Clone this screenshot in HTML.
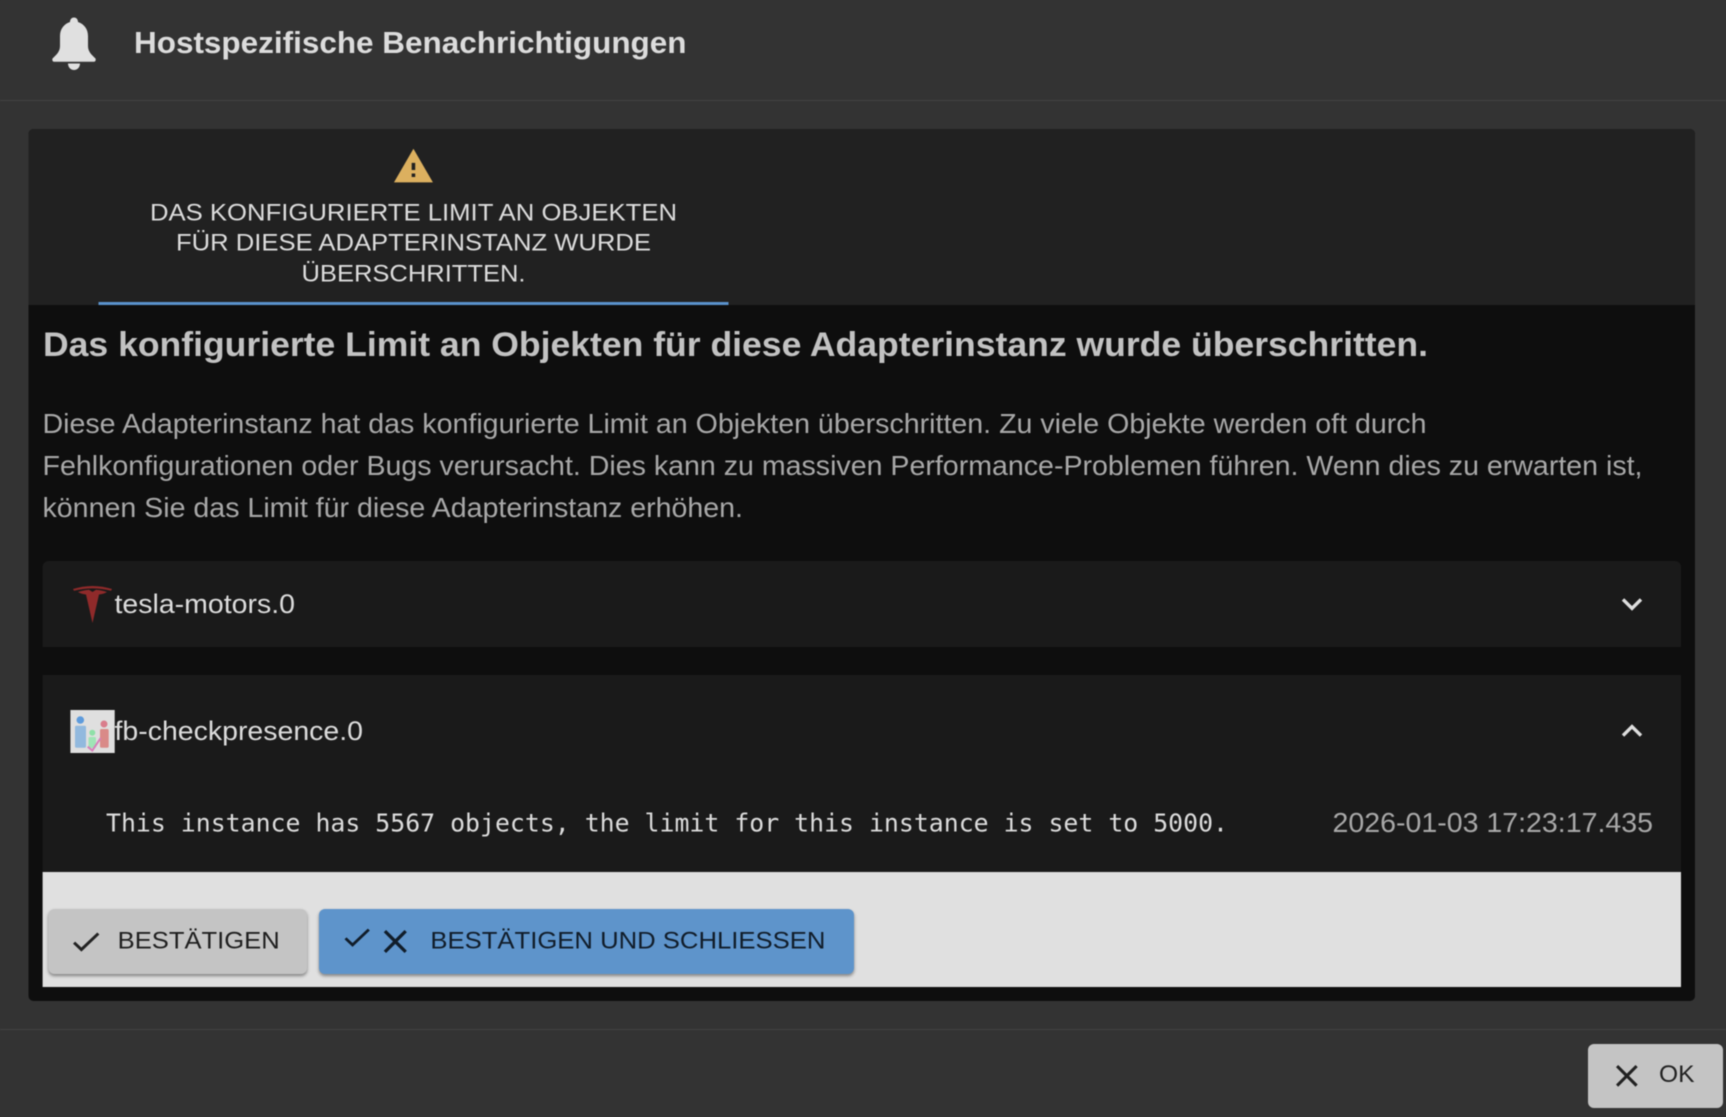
<!DOCTYPE html>
<html lang="de">
<head>
<meta charset="utf-8">
<title>Hostspezifische Benachrichtigungen</title>
<style>
html,body{margin:0;padding:0;background:#333;width:1726px;height:1117px;overflow:hidden}
svg{display:block;position:absolute;left:0;top:0;filter:blur(.45px)}
text{font-family:"Liberation Sans",Arial,sans-serif}
.mono{font-family:"DejaVu Sans Mono","Liberation Mono",monospace}
</style>
</head>
<body>
<svg width="1726" height="1117" viewBox="0 0 1726 1117" xmlns="http://www.w3.org/2000/svg">
  <rect width="1726" height="1117" fill="#333"/>
  <rect x="0" y="100" width="1726" height="1" fill="#434343"/>
  <rect x="0" y="1029" width="1726" height="1" fill="#434343"/>

  <!-- bell -->
  <path fill="#e0e0e0" d="M74 17.5C76.5 17.5 78 19.5 78 22C84 24 88 29 88 36L88 46C88 52 92 55 95.5 58.5C96 60 95.5 61.7 94 61.7L54 61.7C52.5 61.7 52 60 52.5 58.5C56 55 60 52 60 46L60 36C60 29 64 24 70 22C70 19.5 71.5 17.5 74 17.5Z"/>
  <path fill="#e0e0e0" d="M68 63.5L80 63.5C80 67 77.5 70 74 70C70.5 70 68 67 68 63.5Z"/>
  <text x="134" y="53" font-size="31" font-weight="700" fill="#dcdcdc" textLength="552.5" lengthAdjust="spacingAndGlyphs">Hostspezifische Benachrichtigungen</text>

  <!-- panel -->
  <rect x="28.5" y="129" width="1666.5" height="872" rx="5" fill="#0e0e0e"/>
  <path d="M28.5 305V134a5 5 0 0 1 5-5H1690a5 5 0 0 1 5 5V305Z" fill="#212121"/>
  <rect x="98.5" y="302" width="630" height="3" fill="#5a92cc"/>

  <!-- warning -->
  <path fill="#dcb05f" fill-rule="evenodd" transform="translate(392.2 145.2) scale(1.77)" d="M1 21h22L12 2 1 21zm12-3h-2v-2h2v2zm0-4h-2v-4h2v4z"/>
  <text x="150" y="220.3" font-size="24.2" fill="#dcdcdc" textLength="527" lengthAdjust="spacingAndGlyphs">DAS KONFIGURIERTE LIMIT AN OBJEKTEN</text>
  <text x="176" y="250.3" font-size="24.2" fill="#dcdcdc" textLength="475" lengthAdjust="spacingAndGlyphs">FÜR DIESE ADAPTERINSTANZ WURDE</text>
  <text x="301.5" y="281.3" font-size="24.2" fill="#dcdcdc" textLength="224" lengthAdjust="spacingAndGlyphs">ÜBERSCHRITTEN.</text>

  <!-- heading and text -->
  <text x="43" y="356" font-size="34" font-weight="700" fill="#c2c2c2" textLength="1385" lengthAdjust="spacingAndGlyphs">Das konfigurierte Limit an Objekten für diese Adapterinstanz wurde überschritten.</text>
  <text x="42.5" y="433" font-size="27.4" fill="#a8a8a8" textLength="1384" lengthAdjust="spacingAndGlyphs">Diese Adapterinstanz hat das konfigurierte Limit an Objekten überschritten. Zu viele Objekte werden oft durch</text>
  <text x="42.5" y="475" font-size="27.4" fill="#a8a8a8" textLength="1600" lengthAdjust="spacingAndGlyphs">Fehlkonfigurationen oder Bugs verursacht. Dies kann zu massiven Performance-Problemen führen. Wenn dies zu erwarten ist,</text>
  <text x="42.5" y="517" font-size="27.4" fill="#a8a8a8" textLength="700.5" lengthAdjust="spacingAndGlyphs">können Sie das Limit für diese Adapterinstanz erhöhen.</text>

  <!-- accordion 1 -->
  <path d="M42.6 647V567a6 6 0 0 1 6-6H1675a6 6 0 0 1 6 6V647Z" fill="#1a1a1a"/>
  <path fill="#8f2a2a" d="M73 589Q92.5 583 112 589L111 590.7Q92.5 586 74 590.7Z"/>
  <path fill="#8f2a2a" d="M78 592Q84 590 89 589.7L92.5 592L96 589.7Q101 590 107 592Q104 594 99 594.5L92.5 623L86 594.5Q81 594 78 592Z"/>
  <text x="114.5" y="613" font-size="27.2" fill="#dcdcdc" textLength="180.5" lengthAdjust="spacingAndGlyphs">tesla-motors.0</text>
  <path fill="#dedede" transform="translate(1611.6 583.6) scale(1.7)" d="M16.59 8.59 12 13.17 7.41 8.59 6 10l6 6 6-6z"/>

  <!-- accordion 2 -->
  <rect x="42.6" y="675" width="1638.4" height="197" fill="#1a1a1a"/>
  <rect x="70.4" y="710" width="44.3" height="43" fill="#dfdfdf"/>
  <circle cx="80.3" cy="720" r="3.8" fill="#5e9bdc"/>
  <rect x="75" y="725.7" width="11" height="22" rx="1.5" fill="#92b9de"/>
  <circle cx="104" cy="724" r="3.5" fill="#d97d8c"/>
  <rect x="100" y="729" width="8.7" height="18.7" rx="1.5" fill="#d98a88"/>
  <circle cx="92.3" cy="732.7" r="3" fill="#8fe0a8"/>
  <rect x="88.5" y="737" width="7.5" height="11" rx="1.5" fill="#a0e4b6"/>
  <path d="M87.7 746.7L92.3 750.5L100.7 738" fill="none" stroke="#d77fbb" stroke-width="2"/>
  <text x="114.5" y="740" font-size="27.2" fill="#dcdcdc" textLength="248.5" lengthAdjust="spacingAndGlyphs">fb-checkpresence.0</text>
  <path fill="#dedede" transform="translate(1611.6 710.6) scale(1.7)" d="m12 8-6 6 1.41 1.41L12 10.83l4.59 4.58L18 14z"/>
  <text class="mono" x="106" y="831.5" font-size="24.75" fill="#dcdcdc" textLength="1122" lengthAdjust="spacingAndGlyphs">This instance has 5567 objects, the limit for this instance is set to 5000.</text>
  <text x="1332.5" y="832" font-size="27.4" fill="#a8a8a8" textLength="320.5" lengthAdjust="spacingAndGlyphs">2026-01-03 17:23:17.435</text>

  <!-- action box -->
  <rect x="42.6" y="872" width="1638.4" height="115" fill="#e0e0e0"/>
  <rect x="48.5" y="909" width="258.5" height="65" rx="6" fill="#c4c4c4" style="filter:drop-shadow(0 2px 1.5px rgba(0,0,0,.42))"/>
  <path fill="#222" transform="translate(67.9 924.6) scale(1.5 1.42)" d="M9 16.17 4.83 12l-1.42 1.41L9 19 21 7l-1.41-1.41z"/>
  <text x="117.7" y="948.3" font-size="24.2" fill="#1f1f1f" textLength="162" lengthAdjust="spacingAndGlyphs">BESTÄTIGEN</text>

  <rect x="319" y="909" width="535" height="65" rx="6" fill="#5e94cb" style="filter:drop-shadow(0 2px 1.5px rgba(0,0,0,.42))"/>
  <path fill="#111d2a" transform="translate(339.6 921) scale(1.44 1.36)" d="M9 16.17 4.83 12l-1.42 1.41L9 19 21 7l-1.41-1.41z"/>
  <path fill="#111d2a" transform="translate(375.5 921.7) scale(1.65)" d="M19 6.41 17.59 5 12 10.59 6.41 5 5 6.41 10.59 12 5 17.59 6.41 19 12 13.41 17.59 19 19 17.59 13.41 12z"/>
  <text x="430.4" y="948.3" font-size="24.2" fill="#111d2a" textLength="395" lengthAdjust="spacingAndGlyphs">BESTÄTIGEN UND SCHLIESSEN</text>

  <!-- OK button -->
  <rect x="1588" y="1044" width="135" height="64" rx="6" fill="#c4c4c4"/>
  <path fill="#222" transform="translate(1608.25 1057.25) scale(1.55)" d="M19 6.41 17.59 5 12 10.59 6.41 5 5 6.41 10.59 12 5 17.59 6.41 19 12 13.41 17.59 19 19 17.59 13.41 12z"/>
  <text x="1659" y="1082" font-size="24.2" fill="#222" textLength="35.5" lengthAdjust="spacingAndGlyphs">OK</text>
</svg>
</body>
</html>
